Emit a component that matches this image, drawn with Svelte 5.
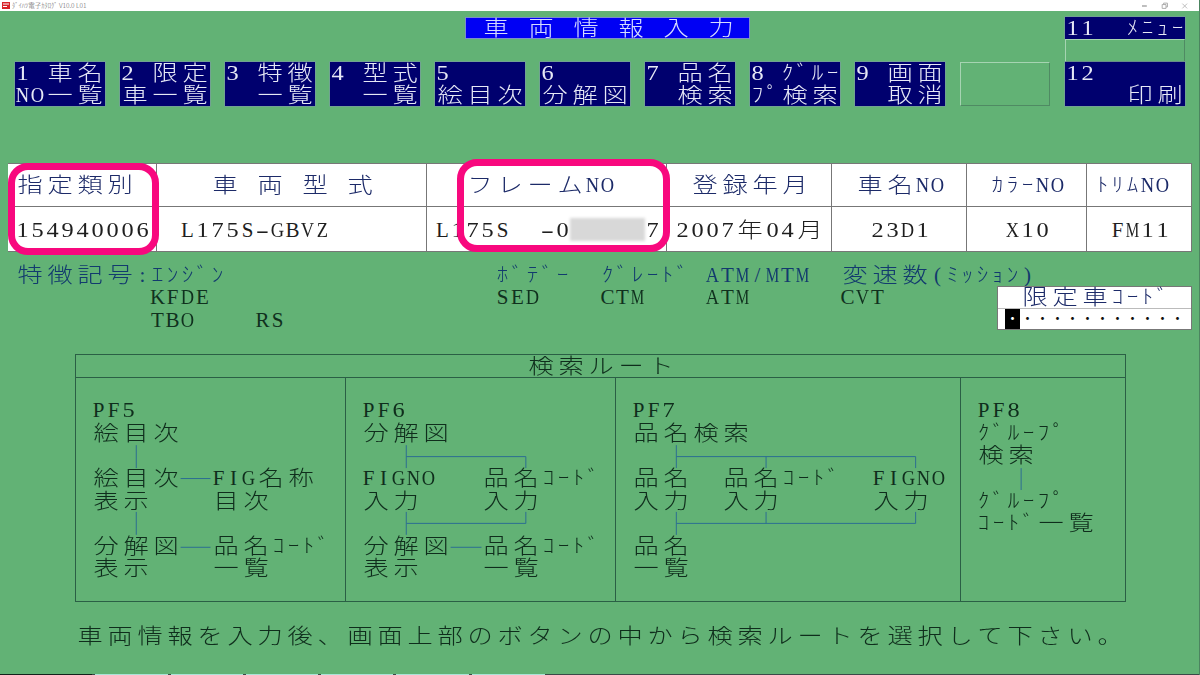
<script lang="ts">
    const ROW_H = 22.6;

    const buttons = [
        ['1 車名', 'NO一覧'],
        ['2 限定', '車一覧'],
        ['3 特徴', '  一覧'],
        ['4 型式', '  一覧'],
        ['5', '絵目次'],
        ['6', '分解図'],
        ['7 品名', '  検索'],
        ['8 ｸﾞﾙｰ', 'ﾌﾟ検索'],
        ['9 画面', '  取消'],
    ];

    // x is the page position of the first character cell, every cell is 15px wide
    const columns = [
        { left: 8, head: '指定類別', headX: 15, value: '154940006', valueX: 15 },
        { left: 157, head: '車 両 型 式', headX: 210, value: 'L175S-GBVZ', valueX: 180 },
        { left: 427, head: 'フレームNO', headX: 465, value: '', valueX: 435 },
        { left: 667, head: '登録年月', headX: 690, value: '2007年04月', valueX: 675 },
        { left: 832, head: '車名NO', headX: 855, value: '23D1', valueX: 870 },
        { left: 967, head: 'ｶﾗｰNO', headX: 990, value: 'X10', valueX: 1005 },
        { left: 1087, head: 'ﾄﾘﾑNO', headX: 1095, value: 'FM11', valueX: 1110 },
    ];

    const panels = [
        {
            left: 75,
            width: 270,
            nodes: [
                { x: 90, r: 0, t: 'PF5' },
                { x: 90, r: 1, t: '絵目次' },
                { x: 90, r: 3, t: '絵目次' },
                { x: 210, r: 3, t: 'FIG名称' },
                { x: 90, r: 4, t: '表示' },
                { x: 210, r: 4, t: '目次' },
                { x: 90, r: 6, t: '分解図' },
                { x: 210, r: 6, t: '品名ｺｰﾄﾞ' },
                { x: 90, r: 7, t: '表示' },
                { x: 210, r: 7, t: '一覧' },
            ],
            links: ['M135.5 444V467', 'M180 477.5H210', 'M135.5 511V534', 'M180 546.5H210'],
        },
        {
            left: 345,
            width: 270,
            nodes: [
                { x: 360, r: 0, t: 'PF6' },
                { x: 360, r: 1, t: '分解図' },
                { x: 360, r: 3, t: 'FIGNO' },
                { x: 480, r: 3, t: '品名ｺｰﾄﾞ' },
                { x: 360, r: 4, t: '入力' },
                { x: 480, r: 4, t: '入力' },
                { x: 360, r: 6, t: '分解図' },
                { x: 480, r: 6, t: '品名ｺｰﾄﾞ' },
                { x: 360, r: 7, t: '表示' },
                { x: 480, r: 7, t: '一覧' },
            ],
            links: ['M405.5 444V467', 'M405.5 455.5H525.5V467', 'M405.5 511V534', 'M405.5 522.5H525.5V511', 'M450 546.5H481'],
        },
        {
            left: 615,
            width: 345,
            nodes: [
                { x: 630, r: 0, t: 'PF7' },
                { x: 630, r: 1, t: '品名検索' },
                { x: 630, r: 3, t: '品名' },
                { x: 720, r: 3, t: '品名ｺｰﾄﾞ' },
                { x: 870, r: 3, t: 'FIGNO' },
                { x: 630, r: 4, t: '入力' },
                { x: 720, r: 4, t: '入力' },
                { x: 870, r: 4, t: '入力' },
                { x: 630, r: 6, t: '品名' },
                { x: 630, r: 7, t: '一覧' },
            ],
            links: [
                'M675.5 444V467',
                'M675.5 455.5H915.5V467',
                'M765.5 455.5V467',
                'M675.5 511V534',
                'M675.5 522.5H915.5V511',
                'M765.5 522.5V511',
            ],
        },
        {
            left: 960,
            width: 165,
            nodes: [
                { x: 975, r: 0, t: 'PF8' },
                { x: 975, r: 1, t: 'ｸﾞﾙｰﾌﾟ' },
                { x: 975, r: 2, t: '検索' },
                { x: 975, r: 4, t: 'ｸﾞﾙｰﾌﾟ' },
                { x: 975, r: 5, t: 'ｺｰﾄﾞ一覧' },
            ],
            links: ['M1020.5 467V489'],
        },
    ];

    const taskbar = [73, 72, 72, 72, 73, 73];

    // the original is a fixed-cell terminal font, so each glyph is fitted to its cell
    const cellClass = (c: string) => {
        if (/[\uff61-\uff9f]/.test(c)) return 'kana';
        if (/[0-9]/.test(c)) return 'digit';
        if (c === '-') return 'dash';
        if (/[MW]/.test(c)) return 'latin-xl';
        if (/[ADGNOVXZ]/.test(c)) return 'latin-l';
        if (/[\x20-\x7e]/.test(c)) return 'latin';
        return 'full';
    };
</script>

{#snippet cells(text: string)}{#each [...text] as c}<span class="c {cellClass(c)}">{c}</span>{/each}{/snippet}

<div class="screen">
    <header class="titlebar">
        <svg class="app-icon" viewBox="0 0 8 7"><rect width="8" height="7" fill="#d8232a" /><path d="M1 2H7M1 4.5H5" stroke="#fff" /></svg>
        <span class="app-name">ﾀﾞｲﾊﾂ電子ｶﾀﾛｸﾞ V10.0 L01</span>
        <svg class="win-controls" viewBox="0 0 50 8">
            <path d="M0 4H5" stroke="#777" />
            <path d="M21 2.5H25V6.5H21ZM22.5 2.5V1H26.5V5H25" fill="none" stroke="#aaa" />
            <path d="M42 1.5L47 6.5M47 1.5L42 6.5" stroke="#bbb" />
        </svg>
    </header>

    <section class="top">
        <div class="top-main">
            <div class="title">{@render cells(' 車 両 情 報 入 力')}</div>
            <div class="btn-row">
                {#each buttons as b}
                    <div class="btn">
                        <div class="line">{@render cells(b[0])}</div>
                        <div class="line">{@render cells(b[1])}</div>
                    </div>
                {/each}
                <div class="btn empty"></div>
            </div>
        </div>
        <div class="top-side">
            <div class="btn menu"><div class="line">{@render cells('11  ﾒﾆｭｰ')}</div></div>
            <div class="empty gap"></div>
            <div class="btn print">
                <div class="line">{@render cells('12')}</div>
                <div class="line">{@render cells('    印刷')}</div>
            </div>
        </div>
    </section>

    <section class="vehicle">
        <div class="table">
            {#each columns as col}
                <div class="th" style="padding-left: {col.headX - col.left}px">{@render cells(col.head)}</div>
            {/each}
            {#each columns as col}
                <div class="td" style="padding-left: {col.valueX - col.left}px">
                    {#if col.value}
                        {@render cells(col.value)}
                    {:else}
                        {@render cells('L175S  -0')}<span class="masked"></span>{@render cells('7')}
                    {/if}
                </div>
            {/each}
        </div>
        <div class="mark mark-type"></div>
        <div class="mark mark-frame"></div>
    </section>

    <section class="info">
        <div class="lbl">{@render cells('特徴記号:')}</div>
        <div class="lbl">{@render cells('ｴﾝｼﾞﾝ')}</div>
        <div class="lbl">{@render cells('ﾎﾞﾃﾞｰ')}</div>
        <div class="lbl">{@render cells('ｸﾞﾚｰﾄﾞ')}</div>
        <div class="lbl">{@render cells('ATM/MTM')}</div>
        <div class="lbl">{@render cells('変速数(ﾐｯｼｮﾝ)')}</div>
        <div></div>

        <div></div>
        <div class="val">{@render cells('KFDE')}</div>
        <div class="val">{@render cells('SED')}</div>
        <div class="val">{@render cells('CTM')}</div>
        <div class="val">{@render cells('ATM')}</div>
        <div class="val">{@render cells('CVT')}</div>
        <div class="code-box">
            <div class="code-label">{@render cells('限定車ｺｰﾄﾞ')}</div>
            <div class="code-input">
                {#each Array(12) as _, i}
                    <span class="dot" class:cursor={i === 0}>･</span>
                {/each}
            </div>
        </div>

        <div></div>
        <div class="val">{@render cells('TBO    RS')}</div>
    </section>

    <section class="route">
        <div class="route-head">{@render cells('検索ルート')}</div>
        <div class="route-body">
            {#each panels as p}
                <div class="panel">
                    <svg class="links" viewBox="{p.left} 377 {p.width} 224">
                        {#each p.links as d}
                            <path {d} />
                        {/each}
                    </svg>
                    {#each p.nodes as n}
                        <div class="node" style="left: {n.x - p.left}px; top: {21 + n.r * ROW_H}px">{@render cells(n.t)}</div>
                    {/each}
                </div>
            {/each}
        </div>
    </section>

    <p class="message">{@render cells('車両情報を入力後、画面上部のボタンの中から検索ルートを選択して下さい。')}</p>

    <footer class="taskbar">
        <span class="tb-start"></span>
        {#each taskbar as w}
            <span class="tb-item" style="width: {w}px"></span>
        {/each}
    </footer>
</div>

<style>
    :global(body) {
        margin: 0;
    }

    .screen {
        position: relative;
        display: flex;
        flex-direction: column;
        width: 1200px;
        height: 675px;
        overflow: hidden;
        box-sizing: border-box;
        border-right: 1px solid #4c8460;
        background: #62b275;
        font-family: 'Liberation Serif', 'Noto Sans CJK JP', serif;
        font-size: 21px;
        font-weight: 300;
        color: #0f2d1c;
    }

    .c {
        display: inline-flex;
        justify-content: center;
        width: 15px;
        white-space: pre;
    }

    .c.full {
        width: 30px;
        font-size: 21px;
        transform: scaleX(1.2);
    }

    .c.kana {
        font-size: 20px;
        transform: scaleX(1.15);
    }

    .c.digit {
        transform: scaleX(1.16);
    }

    .c.dash {
        transform: scaleX(1.9);
    }

    .c.latin-l {
        transform: scaleX(0.88);
    }

    .c.latin-xl {
        transform: scaleX(0.72);
    }

    .line {
        height: 22px;
        line-height: 22px;
        white-space: nowrap;
    }

    .titlebar {
        display: flex;
        align-items: center;
        flex: none;
        height: 11px;
        padding: 0 9px 0 2px;
        background: #fff;
    }

    .app-icon {
        width: 8px;
        height: 7px;
    }

    .app-name {
        margin-left: 2px;
        font-family: 'Noto Sans CJK JP', sans-serif;
        font-size: 6.5px;
        line-height: 11px;
        color: #555;
    }

    .win-controls {
        width: 48px;
        height: 8px;
        margin-left: auto;
    }

    .top {
        display: flex;
        flex: none;
        padding: 6px 0 0 15px;
    }

    .top-main {
        width: 1050px;
    }

    .title {
        box-sizing: border-box;
        width: 285px;
        height: 22px;
        margin-left: 450px;
        border: 1px solid #7c8ccc;
        line-height: 20px;
        white-space: nowrap;
        background: #0000f4;
        color: #d6dcff;
    }

    .btn-row {
        display: flex;
        gap: 15px;
        margin-top: 23px;
    }

    .btn {
        width: 90px;
        height: 44px;
        box-shadow: 0 0 0 0.5px #8092b0;
        background: #00006e;
        color: #e6e8f6;
    }

    .btn.empty {
        box-sizing: border-box;
        box-shadow: none;
    }

    .empty {
        border: 1px solid #a6d4b2;
        border-right-color: #4f8a63;
        border-bottom-color: #4f8a63;
        background: transparent;
    }

    .top-side {
        display: flex;
        flex-direction: column;
        width: 120px;
    }

    .btn.menu {
        width: 120px;
        height: 22px;
    }

    .gap {
        box-sizing: border-box;
        height: 23px;
    }

    .btn.print {
        width: 120px;
    }

    .vehicle {
        position: relative;
        flex: none;
        width: 1184px;
        margin: 57px 0 0 8px;
    }

    .table {
        display: grid;
        grid-template-columns: 149px 270px 240px 165px 135px 120px 105px;
        grid-template-rows: 44px 45px;
        box-sizing: border-box;
        height: 89px;
        background: #fff;
    }

    .th,
    .td {
        display: flex;
        align-items: center;
        box-sizing: border-box;
        border-right: 1px solid #777;
        border-bottom: 1px solid #777;
        line-height: 22px;
        white-space: nowrap;
    }

    .th {
        border-top: 1px solid #777;
        color: #1c2a68;
    }

    .td {
        padding-top: 1px;
        color: #1e1e1e;
    }

    .masked {
        display: inline-block;
        flex: none;
        width: 75px;
        height: 23px;
        background: #d8d8d8;
        filter: blur(1.5px);
    }

    .mark {
        position: absolute;
        box-sizing: border-box;
        border: 7.5px solid #f8087e;
        border-radius: 20px;
    }

    .mark-type {
        left: 0;
        top: 0;
        width: 151px;
        height: 92px;
    }

    .mark-frame {
        left: 449px;
        top: -4px;
        width: 213px;
        height: 93px;
    }

    .info {
        display: grid;
        grid-template-columns: 135px 345px 105px 105px 135px 157px 195px;
        grid-template-rows: repeat(3, 22.4px);
        flex: none;
        margin-top: 12px;
        padding-left: 15px;
        line-height: 22px;
        white-space: nowrap;
    }

    .lbl {
        color: #123a6e;
    }

    .val {
        color: #10301e;
    }

    .code-box {
        grid-column: 7;
        grid-row: 2 / span 2;
        box-sizing: border-box;
        height: 44px;
        border: 1px solid #777;
        background: #fff;
    }

    .code-label {
        box-sizing: border-box;
        height: 22px;
        padding-left: 22px;
        border-bottom: 1px solid #bbb;
        line-height: 21px;
        color: #1c2a68;
    }

    .code-input {
        display: flex;
        height: 20px;
        padding-left: 7px;
    }

    .dot {
        width: 15px;
        font-size: 15px;
        font-weight: 700;
        line-height: 20px;
        text-align: center;
        color: #111;
    }

    .dot.cursor {
        background: #000;
        color: #fff;
    }

    .route {
        flex: none;
        box-sizing: border-box;
        width: 1051px;
        height: 248px;
        margin: 23px 0 0 75px;
        border: 1px solid #2a5f45;
    }

    .route-head {
        box-sizing: border-box;
        height: 23px;
        border-bottom: 1px solid #2a5f45;
        line-height: 22px;
        text-align: center;
        white-space: nowrap;
    }

    .route-body {
        display: grid;
        grid-template-columns: 270px 270px 345px 164px;
        height: 223px;
    }

    .panel {
        position: relative;
        border-right: 1px solid #2a5f45;
    }

    .panel:last-child {
        border-right: none;
    }

    .links {
        position: absolute;
        left: 0;
        top: 0;
        width: 100%;
        height: 224px;
        fill: none;
        stroke: #2c6e92;
        stroke-width: 1;
    }

    .node {
        position: absolute;
        line-height: 22px;
        white-space: nowrap;
    }

    .message {
        flex: none;
        margin: 23px 0 0 75px;
        line-height: 22px;
        white-space: nowrap;
    }

    .taskbar {
        display: flex;
        gap: 3px;
        flex: none;
        height: 1px;
        margin-top: auto;
        background: #3a4a48;
    }

    .tb-start {
        width: 92px;
        background: #12221a;
    }

    .tb-item {
        background: #a8e4d6;
    }
</style>
